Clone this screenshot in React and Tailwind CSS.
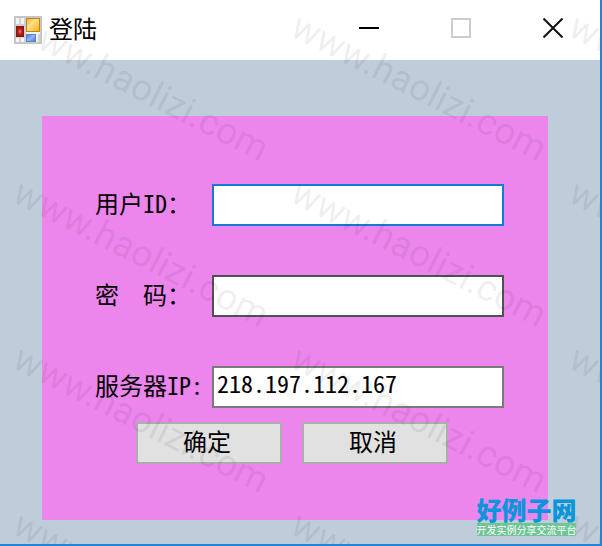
import React, { useState } from 'react';

const WATERMARKS = Array.from({ length: 12 }, (_, i) => i);

const AppIcon = () => (
  <svg className="relative z-20 h-7 w-7 shrink-0" viewBox="0 0 28 28" aria-hidden="true">
    <defs>
      <linearGradient id="gold" x1="0" y1="0" x2="1" y2="1">
        <stop offset="0" stopColor="#e9b12c"/>
        <stop offset="0.4" stopColor="#ffe08a"/>
        <stop offset="1" stopColor="#f0ac12"/>
      </linearGradient>
      <radialGradient id="ruby">
        <stop offset="0" stopColor="#e58a80"/>
        <stop offset="0.5" stopColor="#b92a22"/>
        <stop offset="1" stopColor="#96140f"/>
      </radialGradient>
      <linearGradient id="sky" x1="0" y1="0" x2="1" y2="1">
        <stop offset="0" stopColor="#4479d4"/>
        <stop offset="0.5" stopColor="#8db8f7"/>
        <stop offset="1" stopColor="#3f78dc"/>
      </linearGradient>
    </defs>
    <rect x="1" y="1" width="26" height="26" fill="#f4f4f4" stroke="#c6c6c6" strokeWidth="2"/>
    <path d="M11 2v24M2 9h9M2 21h9M6 2v7M6 21v5M25 18v8" fill="none" stroke="#d2d2d2" strokeWidth="2"/>
    <rect x="12.5" y="2.5" width="13" height="13" fill="url(#gold)" stroke="#b98718"/>
    <rect x="2.5" y="10.5" width="7" height="10" fill="url(#ruby)" stroke="#8e1410"/>
    <rect x="12.5" y="18.5" width="9" height="7" fill="url(#sky)" stroke="#5a86d0"/>
  </svg>
);

const CaptionButton = ({ label, disabled, children }) => (
  <button type="button" aria-label={label} disabled={disabled} className="flex h-14 w-[92px] items-center justify-center">
    <svg className="h-5 w-5" viewBox="0 0 20 20" fill="none" strokeWidth="2" aria-hidden="true">{children}</svg>
  </button>
);

const TitleBar = () => (
  <header className="flex h-15 shrink-0 items-center bg-white pr-px pl-3.5">
    <AppIcon/>
    <h1 className="relative z-20 ml-[7px] flex-1 pb-1 text-2xl font-normal">登陆</h1>
    <div className="flex pb-1">
      <CaptionButton label="最小化"><path d="M0 10h20" stroke="#000"/></CaptionButton>
      <CaptionButton label="最大化" disabled><rect x="1" y="1" width="18" height="18" stroke="#ccc"/></CaptionButton>
      <CaptionButton label="关闭"><path d="M.5.5l19 19M19.5.5l-19 19" stroke="#111"/></CaptionButton>
    </div>
  </header>
);

// half-width latin glyphs, 12px per character at 24px
const Latin = ({ children }) => (
  <span className="[font-feature-settings:'hwid']">{children}</span>
);

const Field = ({ id, label, border, type = 'text', value, onChange }) => (
  <div className="flex items-center">
    <label htmlFor={id} className="w-[117px] shrink-0 pb-1 text-2xl leading-8 whitespace-pre">{label}</label>
    <input id={id} type={type} value={value} onChange={onChange} autoComplete="off"
      className={`h-[42px] min-w-0 flex-1 border-2 bg-white px-[3px] pb-2.5 text-2xl [font-feature-settings:'hwid'] outline-none ${border}`}/>
  </div>
);

const DialogButton = ({ type = 'button', children }) => (
  <button type={type} className="h-[42px] w-[146px] border-2 border-[#adadad] bg-[#e1e1e1] pr-1 pb-1 text-2xl leading-8">
    {children}
  </button>
);

const Watermark = () => (
  <div aria-hidden="true" className="pointer-events-none absolute inset-0 z-10 overflow-hidden">
    <div className="grid auto-rows-[166px] grid-cols-[repeat(3,278px)] pl-4">
      {WATERMARKS.map((i) => (
        <div key={i} className="pt-1">
          <span className="block w-max origin-left rotate-[27deg] font-[Roboto,sans-serif] text-[37px] leading-10 font-normal text-black/8">
            www.haolizi.com
          </span>
        </div>
      ))}
    </div>
  </div>
);

const SiteLogo = () => (
  <div className="absolute right-6 bottom-2 z-20 w-[99px]">
    <div className="flex justify-center pb-0.5 text-[25px] leading-6 font-black whitespace-nowrap text-[#0795dc]">好例子网</div>
    <div className="flex h-[13px] items-center justify-center bg-[#70c496] text-[10px] leading-none whitespace-nowrap text-white">
      开发实例分享交流平台
    </div>
  </div>
);

export default function App() {
  const [user, setUser]         = useState('');
  const [password, setPassword] = useState('');
  const [server, setServer]     = useState('218.197.112.167');

  return (
    <div className="relative flex min-h-screen flex-col overflow-hidden border-r-2 border-b-2 border-[#2385d5] bg-[#bfccd9] font-['Noto_Sans_CJK_SC',sans-serif] text-black">
      <TitleBar/>

      <main className="flex flex-1 flex-col pt-14 pr-[52px] pb-6 pl-[42px]">
        <form className="flex-1 bg-[#ec86ec] pt-[68px] pr-11 pb-14 pl-[53px]" onSubmit={(e) => e.preventDefault()}>
          <div className="flex flex-col gap-[49px]">
            <Field id="user" label={<>用户<Latin>ID</Latin>：</>} border="border-[#127bd8]"
              value={user} onChange={(e) => setUser(e.target.value)}/>
            <Field id="password" type="password" label="密　码：" border="border-[#505050]"
              value={password} onChange={(e) => setPassword(e.target.value)}/>
            <Field id="server" label={<>服务器<Latin>IP:</Latin></>} border="border-[#7a7a7a]"
              value={server} onChange={(e) => setServer(e.target.value)}/>
          </div>
          <div className="mt-3.5 flex gap-5 pl-[41px]">
            <DialogButton type="submit">确定</DialogButton>
            <DialogButton>取消</DialogButton>
          </div>
        </form>
      </main>

      <Watermark/>
      <SiteLogo/>
    </div>
  );
}
